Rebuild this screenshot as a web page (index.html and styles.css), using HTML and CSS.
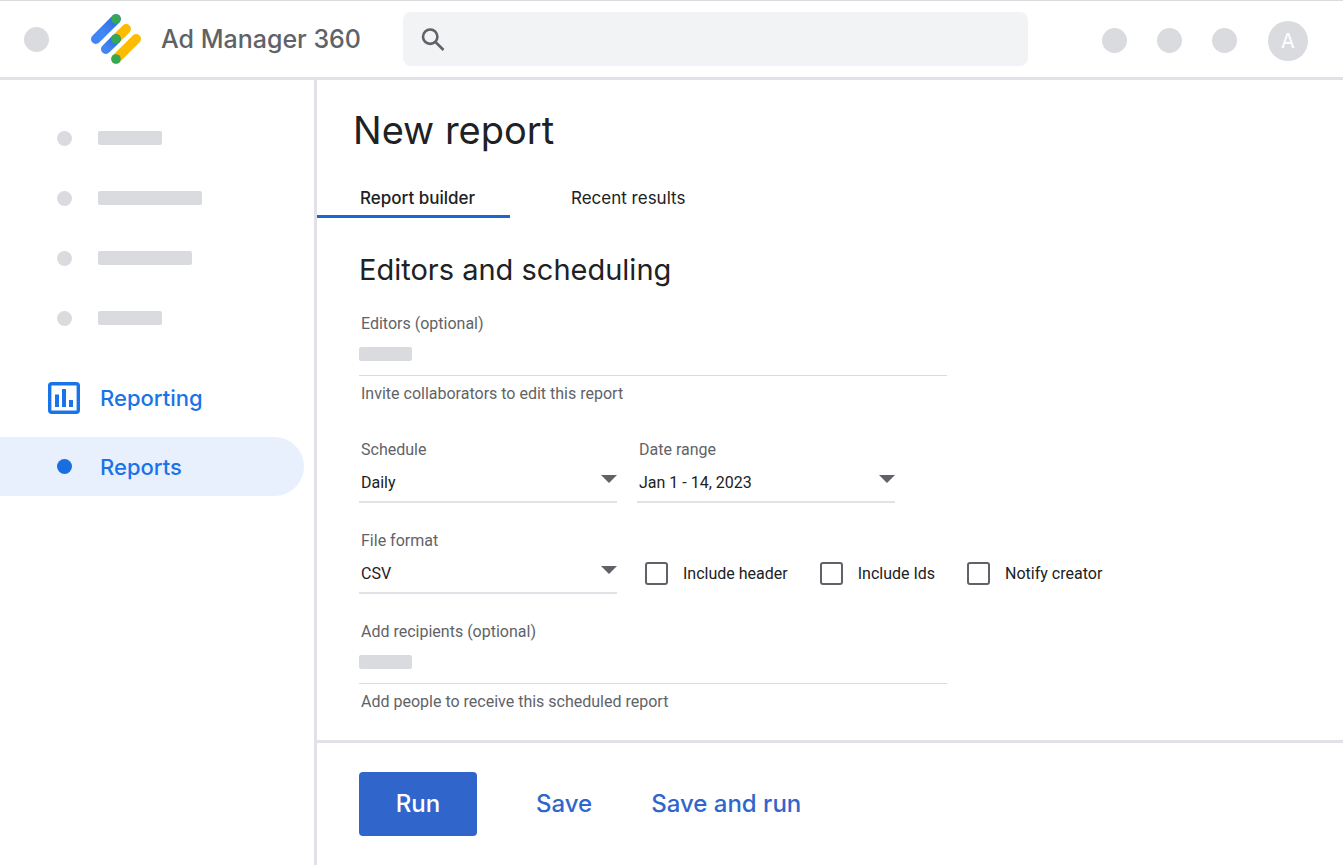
FILE: index.html
```html
<!DOCTYPE html>
<html lang="en">
<head>
  <meta charset="utf-8">
  <meta name="viewport" content="width=device-width, initial-scale=1">
  <title>Ad Manager 360 - New report</title>
  <link rel="stylesheet" href="styles.css">
</head>
<body>
  <header class="topbar">
    <div class="brand">
      <span class="dot dot-large"></span>
      <svg class="logo" viewBox="0 0 50 50" aria-hidden="true">
        <defs>
          <linearGradient id="shade-a" gradientUnits="userSpaceOnUse" x1="25" y1="5" x2="12" y2="18">
            <stop offset="0" stop-color="#2b6fdc"/><stop offset="1" stop-color="#4285f4"/>
          </linearGradient>
          <linearGradient id="shade-b" gradientUnits="userSpaceOnUse" x1="25" y1="25" x2="16" y2="34">
            <stop offset="0" stop-color="#2b6fdc"/><stop offset="1" stop-color="#4285f4"/>
          </linearGradient>
        </defs>
        <g fill="none" stroke-width="9.6" stroke-linecap="round">
          <path d="M25 5 4.8 25.2" stroke="url(#shade-a)"/>
          <path d="M35.200 14.800 25 25" stroke="#fbbc04"/>
          <path d="M25 25 14.800 35.200" stroke="url(#shade-b)"/>
          <path d="M45.200 24.800 25 45" stroke="#fbbc04"/>
        </g>
        <g fill="#34a853">
          <circle cx="25" cy="5" r="4.800"/><circle cx="25" cy="25" r="4.800"/><circle cx="25" cy="45" r="4.800"/>
        </g>
      </svg>
      <span class="brand-name">Ad Manager 360</span>
    </div>
    <label class="search">
      <svg viewBox="0 0 24 24" aria-hidden="true"><path fill="none" stroke="#5f6368" stroke-width="2.600" d="M14.500 15 22.500 23M16.400 9.700a7.200 7.200 0 1 1-14.400 0a7.200 7.200 0 1 1 14.400 0z"/></svg>
      <input type="search" aria-label="Search">
    </label>
    <div class="tools">
      <span class="dot dot-large"></span>
      <span class="dot dot-large"></span>
      <span class="dot dot-large"></span>
      <button class="avatar" type="button" aria-label="Account A">A</button>
    </div>
  </header>

  <div class="shell">
    <nav class="sidebar" aria-label="Main">
      <div class="nav-item"><span class="nav-icon"><span class="dot"></span></span><span class="bar bar-short"></span></div>
      <div class="nav-item"><span class="nav-icon"><span class="dot"></span></span><span class="bar bar-long"></span></div>
      <div class="nav-item"><span class="nav-icon"><span class="dot"></span></span><span class="bar bar-mid"></span></div>
      <div class="nav-item"><span class="nav-icon"><span class="dot"></span></span><span class="bar bar-short"></span></div>
      <a class="nav-item nav-link nav-section" href="#reporting">
        <span class="nav-icon">
          <svg class="chart" viewBox="0 0 32 32" aria-hidden="true"><rect x="1.700" y="1.700" width="28.600" height="28.600" rx="2" fill="none" stroke="#1a73e8" stroke-width="3.400"/><path fill="#1a73e8" d="M7 12.500h4V25H7zM14 7h4v18h-4zM21 18h4v7h-4z"/></svg>
        </span>
        <span>Reporting</span>
      </a>
      <a class="nav-item nav-link nav-current" href="#reports" aria-current="page">
        <span class="nav-icon"><span class="dot dot-blue"></span></span>
        <span>Reports</span>
      </a>
    </nav>

    <main class="content">
      <h1>New report</h1>
      <div class="tabs" role="tablist">
        <button class="tab tab-active" type="button" role="tab" aria-selected="true">Report builder</button>
        <button class="tab" type="button" role="tab" aria-selected="false">Recent results</button>
      </div>
      <form class="form" id="report">
        <h2>Editors and scheduling</h2>
        <div class="field">
          <label for="editors">Editors (optional)</label>
          <div class="control"><span class="bar bar-chip"></span><input id="editors" type="text" aria-describedby="editors-help"></div>
          <p class="help" id="editors-help">Invite collaborators to edit this report</p>
        </div>
        <div class="row row-schedule">
          <div class="field field-select">
            <label for="schedule">Schedule</label>
            <div class="select"><select id="schedule"><option>Daily</option></select></div>
          </div>
          <div class="field field-select">
            <label for="range">Date range</label>
            <div class="select"><select id="range"><option>Jan 1 - 14, 2023</option></select></div>
          </div>
        </div>
        <div class="row">
          <div class="field field-select">
            <label for="format">File format</label>
            <div class="select"><select id="format"><option>CSV</option></select></div>
          </div>
          <div class="checks">
            <label><input type="checkbox">Include header</label>
            <label><input type="checkbox">Include Ids</label>
            <label><input type="checkbox">Notify creator</label>
          </div>
        </div>
        <div class="field">
          <label for="recipients">Add recipients (optional)</label>
          <div class="control"><span class="bar bar-chip"></span><input id="recipients" type="text" aria-describedby="recipients-help"></div>
          <p class="help" id="recipients-help">Add people to receive this scheduled report</p>
        </div>
      </form>
      <footer class="actions">
        <button class="btn btn-primary" type="submit" form="report">Run</button>
        <button class="btn" type="button">Save</button>
        <button class="btn" type="button">Save and run</button>
      </footer>
    </main>
  </div>
</body>
</html>
```
FILE: styles.css
```css
:root {
  --display: "Google Sans", Inter, sans-serif;
  --grey: #dadce0;
  --line: #e1e2e7;
  --text: #202124;
  --muted: #5f6368;
}

* { box-sizing: border-box; }

body {
  margin: 0;
  min-height: 100vh;
  display: flex;
  flex-direction: column;
  font: 16px/20px Roboto, sans-serif;
  color: var(--text);
  background: #fff;
}

button, input, select { font: inherit; color: inherit; }
h1, h2, p { margin: 0; font-weight: 400; }

.dot {
  flex: none;
  width: 15px;
  height: 15px;
  border-radius: 50%;
  background: #dadbdf;
}
.dot-large { width: 25px; height: 25px; }
.dot-blue { background: #1a6fe0; }

.bar {
  flex: none;
  height: 14px;
  border-radius: 2px;
  background: #dadbdf;
}
.bar-short { width: 64px; }
.bar-mid { width: 94px; }
.bar-long { width: 104px; }
.bar-chip { width: 53px; }

/* Top bar */
.topbar {
  display: flex;
  align-items: center;
  height: 80px;
  padding: 0 35px 0 24px;
  border-top: 1px solid var(--grey);
  border-bottom: 3px solid var(--line);
}
.brand {
  flex: 0 0 379px;
  display: flex;
  align-items: center;
}
.logo { width: 50px; height: 50px; margin: 0 20px 0 42px; }
.brand-name {
  font: 500 25px/36px var(--display);
  color: var(--muted);
}
.search {
  flex: 1;
  height: 54px;
  display: flex;
  align-items: center;
  gap: 12px;
  padding: 0 18px;
  border-radius: 8px;
  background: #f1f3f4;
}
.search svg { width: 24px; height: 24px; flex: none; }
.search input {
  flex: 1;
  min-width: 0;
  border: 0;
  outline: 0;
  background: none;
}
.tools {
  display: flex;
  align-items: center;
  gap: 30px;
  margin-left: 74px;
  padding-top: 3px;
}
.avatar {
  width: 40px;
  height: 40px;
  margin-left: 1px;
  padding: 0;
  border: 0;
  border-radius: 50%;
  background: #dadbdf;
  color: #fff;
  font: 20px/40px var(--display);
}

/* Side navigation */
.shell { flex: 1; display: flex; }
.sidebar {
  flex: 0 0 317px;
  padding: 28px 10px 28px 0;
  border-right: 3px solid var(--line);
}
.nav-item {
  display: flex;
  align-items: center;
  height: 60px;
  padding-left: 44px;
  gap: 14px;
}
.nav-icon {
  flex: 0 0 40px;
  display: flex;
  justify-content: center;
}
.nav-link {
  gap: 16px;
  font: 500 22px/32px var(--display);
  color: #1a73e8;
  text-decoration: none;
}
.nav-section { margin: 20px 0 9px; }
.nav-current {
  height: 59px;
  border-radius: 0 30px 30px 0;
  background: #e8f0fe;
}
.chart { width: 32px; height: 32px; }

/* Content */
.content {
  flex: 1;
  min-width: 0;
  display: flex;
  flex-direction: column;
}
h1 {
  padding: 26px 36px 24px;
  font: 38px/48px var(--display);
}
.tabs { display: flex; }
.tab {
  height: 40px;
  padding: 2px 34px 0 61px;
  border: 0;
  border-bottom: 3px solid transparent;
  background: none;
  font: 17px/24px var(--display);
  text-align: left;
}
.tab-active {
  min-width: 193px;
  padding-left: 43px;
  border-color: #1967d2;
  font-weight: 500;
}

.form {
  flex: 1;
  display: flex;
  flex-direction: column;
  padding: 34px 42px 28px;
}
h2 {
  margin-bottom: 25px;
  font: 29px/36px var(--display);
}
.field {
  width: 588px;
  max-width: 100%;
  color: var(--muted);
}
.field label {
  display: block;
  padding-left: 2px;
  line-height: 22px;
}
.control {
  display: flex;
  align-items: center;
  gap: 8px;
  height: 41px;
  padding-bottom: 2px;
  border-bottom: 1px solid var(--grey);
}
.control input {
  flex: 1;
  min-width: 0;
  border: 0;
  outline: 0;
  background: none;
  color: var(--text);
}
.help { padding: 8px 2px 0; }
.row {
  display: flex;
  align-items: flex-end;
  gap: 28px;
  margin-bottom: 27px;
}
.row-schedule { gap: 20px; margin-top: 35px; }
.field-select { width: 258px; }
.select {
  position: relative;
  border-bottom: 2px solid var(--line);
}
.select::after {
  content: "";
  position: absolute;
  top: 14px;
  right: 0;
  border: 8px solid transparent;
  border-top-color: var(--muted);
  border-bottom: 0;
  pointer-events: none;
}
.select select {
  display: block;
  width: 100%;
  height: 40px;
  padding: 3px 2px 0;
  border: 0;
  outline: 0;
  appearance: none;
  background: none;
  color: var(--text);
}
.checks { display: flex; gap: 32px; padding-bottom: 9px; }
.checks label {
  display: flex;
  align-items: center;
  gap: 15px;
}
.checks input {
  appearance: none;
  width: 23px;
  height: 23px;
  margin: 0;
  border: 2px solid var(--muted);
  border-radius: 3px;
}

/* Footer actions */
.actions {
  display: flex;
  align-items: center;
  gap: 59px;
  padding: 29px 42px;
  border-top: 3px solid var(--line);
}
.btn {
  height: 64px;
  padding: 0;
  border: 0;
  background: none;
  color: #3066cc;
  font: 500 24px/32px var(--display);
}
.btn-primary {
  width: 118px;
  border-radius: 4px;
  background: #3066cc;
  color: #fff;
}
```
